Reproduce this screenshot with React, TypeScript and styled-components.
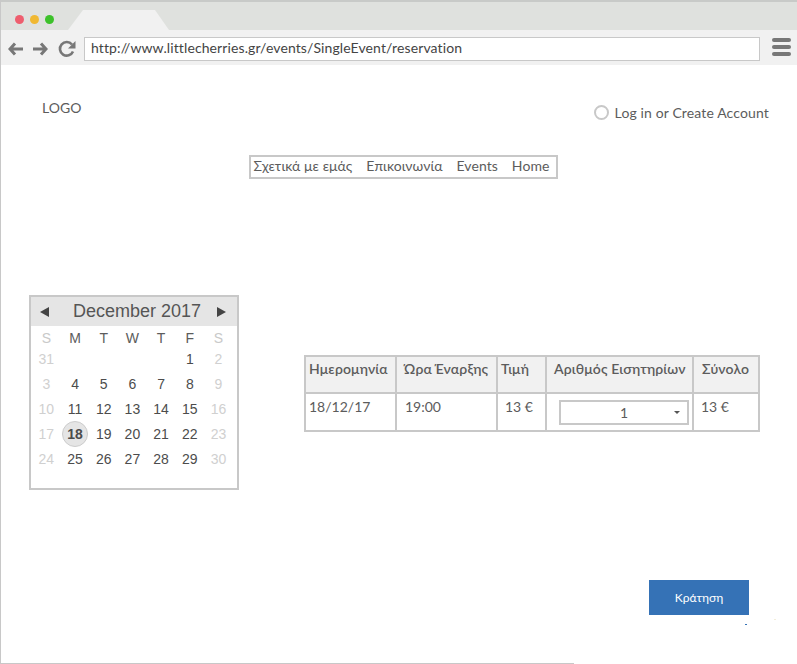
import React from 'react'
import styled, { createGlobalStyle } from 'styled-components'

const GlobalStyle = createGlobalStyle`
  html, body {
    margin: 0;
    padding: 0;
    background: #fff;
  }
  * { box-sizing: border-box; }
`

const Page = styled.div`
  position: relative;
  width: 797px;
  height: 664px;
  overflow: hidden;
  background: #fff;
  border-left: 1px solid #c8c8c8;
  font-family: Lato, "Noto Sans", sans-serif;
  color: #5c5c5c;
`

const BottomLine = styled.div`
  position: absolute;
  left: 0;
  bottom: 0;
  width: 573px;
  height: 1px;
  background: #c8c8c8;
`

const Speck = styled.span<{ $x: number; $y: number; $color: string }>`
  position: absolute;
  left: ${p => p.$x}px;
  top: ${p => p.$y}px;
  width: 2px;
  height: 1px;
  background: ${p => p.$color};
`

const TabBar = styled.div`
  height: 30px;
  border-top: 2px solid #c8cac8;
  background: #dfe1de;
  display: flex;
  align-items: flex-end;
  gap: 8px;
  padding: 0 0 0 13.5px;
`

const Dots = styled.div`
  display: flex;
  gap: 6px;
  align-self: flex-start;
  margin-top: 13px;
`

const Dot = styled.span<{ $color: string }>`
  width: 9px;
  height: 9px;
  border-radius: 50%;
  background: ${p => p.$color};
`

const Tab = styled.div`
  width: 101px;
  height: 20px;
  margin-left: 6.5px;
  background: #f1f1f1;
  clip-path: polygon(15px 0, 87px 0, 100% 100%, 0 100%);
`

const ToolBar = styled.div`
  height: 35px;
  background: #f1f1f1;
  display: flex;
  align-items: center;
  padding: 3px 5px 0 7px;
`

const NavIcons = styled.div`
  display: flex;
  align-items: center;
  gap: 10px;
  width: 76px;
`

const AddressBar = styled.div`
  width: 676px;
  height: 24px;
  background: #fff;
  border: 1px solid #c8c8c8;
  font-size: 14px;
  letter-spacing: 0.11px;
  line-height: 20px;
  padding-left: 6px;
  color: #444;
`

const Burger = styled.div`
  margin: 5px 0 0 12px;
  align-self: flex-start;
  width: 19px;
  display: flex;
  flex-direction: column;
  gap: 3px;
  > span {
    height: 4px;
    border-radius: 2px;
    background: #777;
  }
`

const Header = styled.div`
  display: flex;
  justify-content: space-between;
  padding: 34px 28px 0 41px;
  height: 90px;
`

const Logo = styled.div`
  font-size: 14px;
  line-height: 17px;
`

const Login = styled.div`
  display: flex;
  align-items: center;
  gap: 6px;
  font-size: 14px;
  letter-spacing: 0.13px;
  line-height: 17px;
  margin-top: 5px;
  height: 17px;
`

const Radio = styled.span`
  width: 15px;
  height: 15px;
  border-radius: 50%;
  border: 2px solid #c8c8c8;
`

const NavWrap = styled.div`
  display: flex;
  justify-content: center;
  padding-left: 8px;
`

const Nav = styled.div`
  width: 309px;
  height: 24px;
  border: 2px solid #c8c8c8;
  display: flex;
  justify-content: space-between;
  padding: 0 6px 0 3px;
  font-size: 14px;
  letter-spacing: 0.08px;
  line-height: 18px;
`

const Main = styled.div`
  display: flex;
  align-items: flex-start;
  padding: 116px 0 0 28px;
  height: 401px;
`

const Calendar = styled.div`
  width: 210px;
  height: 195px;
  border: 2px solid #c8c8c8;
  font-family: "Liberation Sans", Arial, sans-serif;
  flex-shrink: 0;
`

const CalHead = styled.div`
  height: 29px;
  background: #e5e5e5;
  display: flex;
  align-items: center;
  justify-content: space-between;
  padding: 0 11px 0 9px;
  font-size: 18px;
  color: #555;
`

const CalTitle = styled.span`
  margin-left: 8px;
`

const Arrow = styled.span<{ $right?: boolean }>`
  width: 0;
  height: 0;
  border-top: 5px solid transparent;
  border-bottom: 5px solid transparent;
  ${p => (p.$right ? 'border-left: 9px solid #444;' : 'border-right: 9px solid #444;')}
`

const CalGrid = styled.div`
  display: grid;
  grid-template-columns: repeat(7, 28.7px);
  grid-template-rows: 20px repeat(5, 25px);
  padding-left: 1px;
`

const WeekDay = styled.div<{ $muted?: boolean }>`
  padding-top: 4px;
  font-size: 14px;
  line-height: 16px;
  text-align: center;
  color: ${p => (p.$muted ? '#c9c9c9' : '#5c5c5c')};
`

const DayCell = styled.div<{ $muted?: boolean }>`
  display: flex;
  align-items: center;
  justify-content: center;
  font-size: 14px;
  color: ${p => (p.$muted ? '#d0d0d0' : '#4c4c4c')};
  > b {
    width: 26px;
    height: 26px;
    border-radius: 50%;
    background: #e5e5e5;
    border: 1px solid #ccc;
    display: flex;
    align-items: center;
    justify-content: center;
    font-weight: 700;
  }
`

const TableWrap = styled.div`
  margin: 60px 0 0 65px;
  width: 456px;
  border: 2px solid #c8c8c8;
  display: grid;
  grid-template-columns: 91px 101px 49px 147px 64px;
  grid-template-rows: 37px 36px;
`

const Cell = styled.div<{ $head?: boolean; $pad?: number }>`
  background: ${p => (p.$head ? '#f1f1f1' : '#fff')};
  border-right: 2px solid #c8c8c8;
  ${p => (p.$head ? 'border-bottom: 2px solid #c8c8c8;' : '')}
  padding: ${p => (p.$head ? 3 : 4)}px 0 0 ${p => p.$pad ?? 3}px;
  font-size: 14px;
  letter-spacing: ${p => (p.$head ? 0.15 : 0)}px;
  line-height: 18px;
  white-space: nowrap;
  font-weight: ${p => (p.$head ? 600 : 400)};
  &:nth-child(5n) { border-right: none; }
`

const Select = styled.div`
  margin: 2px 0 0 12px;
  width: 130px;
  height: 25px;
  border: 2px solid #c8c8c8;
  display: flex;
  align-items: center;
  position: relative;
  justify-content: center;
  font-size: 14px;
`

const Caret = styled.span`
  position: absolute;
  right: 7px;
  top: 9px;
  border-left: 3px solid transparent;
  border-right: 3px solid transparent;
  border-top: 3px solid #555;
`

const Footer = styled.div`
  display: flex;
  justify-content: flex-end;
  padding-right: 48px;
`

const Reserve = styled.button`
  width: 100px;
  height: 35px;
  border: none;
  background: #3572b6;
  color: #fff;
  font-family: Lato, "Noto Sans", sans-serif;
  font-size: 12px;
`

const BackIcon = ({ flip }: { flip?: boolean }) => (
  <svg width="15" height="14" viewBox="0 0 15 14" style={flip ? { transform: 'scaleX(-1)' } : undefined}>
    <path d="M7 1.5 2 7l5 5.5M2.5 7H15" fill="none" stroke="#777" strokeWidth="3" />
  </svg>
)

const ReloadIcon = () => (
  <svg width="18" height="18" viewBox="0 0 18 18">
    <path d="M15 11.5A6.8 6.8 0 1 1 14 4.5" fill="none" stroke="#777" strokeWidth="2.6" />
    <path d="M17.5 1v7.5H10z" fill="#777" />
  </svg>
)

const weekDays = ['S', 'M', 'T', 'W', 'T', 'F', 'S']
const days: (number | null)[] = [
  31, null, null, null, null, 1, 2,
  3, 4, 5, 6, 7, 8, 9,
  10, 11, 12, 13, 14, 15, 16,
  17, 18, 19, 20, 21, 22, 23,
  24, 25, 26, 27, 28, 29, 30,
]

function App() {
  return (
    <Page>
      <GlobalStyle />
      <TabBar>
        <Dots>
          <Dot $color="#ee5e6e" />
          <Dot $color="#f0b832" />
          <Dot $color="#3cc12a" />
        </Dots>
        <Tab />
      </TabBar>
      <ToolBar>
        <NavIcons>
          <BackIcon />
          <BackIcon flip />
          <ReloadIcon />
        </NavIcons>
        <AddressBar>http://www.littlecherries.gr/events/SingleEvent/reservation</AddressBar>
        <Burger>
          <span />
          <span />
          <span />
        </Burger>
      </ToolBar>
      <Header>
        <Logo>LOGO</Logo>
        <Login>
          <Radio />
          Log in or Create Account
        </Login>
      </Header>
      <NavWrap>
        <Nav>
          <span>Σχετικά με εμάς</span>
          <span>Επικοινωνία</span>
          <span>Events</span>
          <span>Home</span>
        </Nav>
      </NavWrap>
      <Main>
        <Calendar>
          <CalHead>
            <Arrow />
            <CalTitle>December 2017</CalTitle>
            <Arrow $right />
          </CalHead>
          <CalGrid>
            {weekDays.map((d, i) => (
              <WeekDay key={i} $muted={i === 0 || i === 6}>{d}</WeekDay>
            ))}
            {days.map((d, i) => (
              <DayCell key={i} $muted={i % 7 === 0 || i % 7 === 6}>
                {d === 18 ? <b>{d}</b> : d}
              </DayCell>
            ))}
          </CalGrid>
        </Calendar>
        <TableWrap>
          <Cell $head>Ημερομηνία</Cell>
          <Cell $head $pad={7}>Ώρα Έναρξης</Cell>
          <Cell $head>Τιμή</Cell>
          <Cell $head $pad={7}>Αριθμός Εισητηρίων</Cell>
          <Cell $head $pad={8}>Σύνολο</Cell>
          <Cell>18/12/17</Cell>
          <Cell $pad={8}>19:00</Cell>
          <Cell $pad={7}>13 €</Cell>
          <Cell $pad={0}>
            <Select>
              1
              <Caret />
            </Select>
          </Cell>
          <Cell $pad={7}>13 €</Cell>
        </TableWrap>
      </Main>
      <Footer>
        <Reserve>Κράτηση</Reserve>
      </Footer>
      <Speck $x={744} $y={624} $color="#3572b6" />
      <Speck $x={773} $y={619} $color="#f3eedb" />
      <BottomLine />
    </Page>
  )
}

export default App
